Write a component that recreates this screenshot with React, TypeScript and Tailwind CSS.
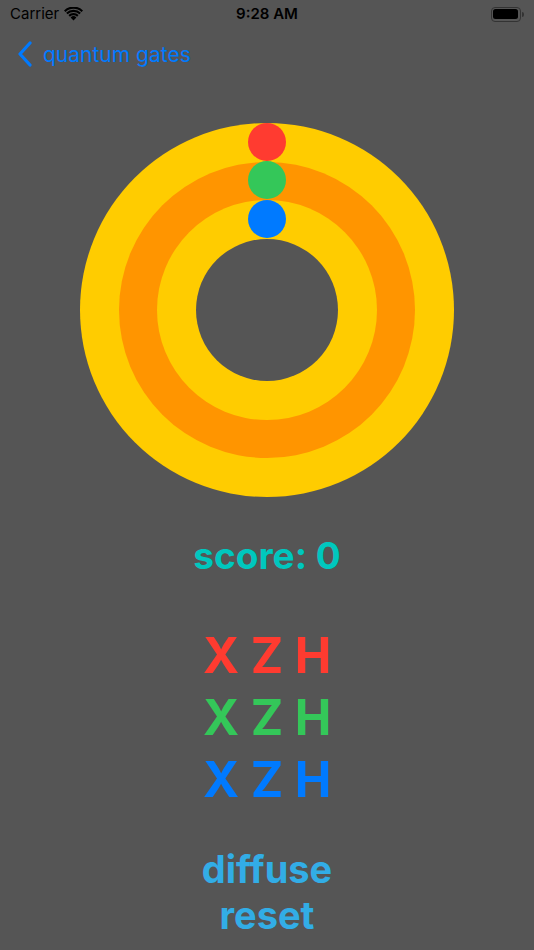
import React from 'react';

const gates = [
  { color: 'text-[#ff3b30]' },
  { color: 'text-[#34c759]' },
  { color: 'text-[#007aff]' },
];

function StatusBar() {
  return (
    <div className="h-[28px] flex items-center justify-between px-[10px] text-[15px] text-black font-['Inter',sans-serif]">
      <div className="flex items-center gap-[5px] w-[120px]">
        <span>Carrier</span>
        <svg width="19" height="14" viewBox="0 0 19 14">
          <path d="M9.5 13.5 L6.6 10.4 A4.2 4.2 0 0 1 12.4 10.4 Z" fill="#000" />
          <path d="M4.4 8.1 A7.4 7.4 0 0 1 14.6 8.1 L13.1 9.7 A5.2 5.2 0 0 0 5.9 9.7 Z" fill="#000" />
          <path d="M2.1 5.7 A10.6 10.6 0 0 1 16.9 5.7 L15.4 7.3 A8.4 8.4 0 0 0 3.6 7.3 Z" fill="#000" />
          <path d="M0 3.4 A13.6 13.6 0 0 1 19 3.4 L17.5 5 A11.4 11.4 0 0 0 1.5 5 Z" fill="#000" />
        </svg>
      </div>
      <span className="font-semibold">9:28 AM</span>
      <div className="w-[120px] flex justify-end">
        <div className="flex items-center">
          <div className="w-[30px] h-[15px] rounded-[4px] border border-[#333] p-[1.5px]">
            <div className="w-full h-full rounded-[2.5px] bg-black" />
          </div>
          <div className="w-[2px] h-[5px] rounded-r-sm bg-[#333] ml-[1px]" />
        </div>
      </div>
    </div>
  );
}

function NavBar() {
  return (
    <div className="h-[52px] flex items-center pl-[17px] gap-[10px] text-[#007aff] font-['Inter',sans-serif]">
      <svg width="16" height="26" viewBox="0 0 16 26" fill="none">
        <path d="M13 2 L3 13 L13 24" stroke="#007aff" strokeWidth="3.2" strokeLinecap="round" strokeLinejoin="round" />
      </svg>
      <span className="text-[21px] leading-none">quantum gates</span>
    </div>
  );
}

function Rings() {
  return (
    <div className="relative flex justify-center mt-[43px]">
      <div className="w-[374px] h-[374px] rounded-full bg-[#ffcc00] flex items-center justify-center">
        <div className="w-[296px] h-[296px] rounded-full bg-[#ff9500] flex items-center justify-center">
          <div className="w-[220px] h-[220px] rounded-full bg-[#ffcc00] flex items-center justify-center">
            <div className="w-[142px] h-[142px] rounded-full bg-[#555555]" />
          </div>
        </div>
      </div>
      <div className="absolute left-1/2 top-0 -translate-x-1/2 flex flex-col">
        <div className="w-[38px] h-[38px] mt-0 rounded-full bg-[#ff3b30]" />
        <div className="w-[38px] h-[38px] rounded-full bg-[#34c759]" />
        <div className="w-[38px] h-[38px] mt-[1px] rounded-full bg-[#007aff]" />
      </div>
    </div>
  );
}

export default function App() {
  return (
    <div className="w-[534px] h-[950px] bg-[#555555] overflow-hidden flex flex-col">
      <StatusBar />
      <NavBar />
      <Rings />
      <div className="mt-[37px] text-center text-[37px] leading-[44px] font-bold text-[#00c7be] font-['Inter',sans-serif]">
        score: 0
      </div>
      <div className="mt-[51px] flex flex-col items-center gap-[8px] font-['Inter',sans-serif] font-bold">
        {gates.map((g, i) => (
          <div key={i} className={`flex text-[49px] leading-[54px] ${g.color}`}>
            <span className="w-[46px] text-center">X</span>
            <span className="w-[46px] text-center">Z</span>
            <span className="w-[46px] text-center">H</span>
          </div>
        ))}
      </div>
      <div className="mt-[39px] flex flex-col items-center text-[38px] leading-[46px] font-bold text-[#32ade6] font-['Inter',sans-serif]">
        <span>diffuse</span>
        <span>reset</span>
      </div>
    </div>
  );
}
